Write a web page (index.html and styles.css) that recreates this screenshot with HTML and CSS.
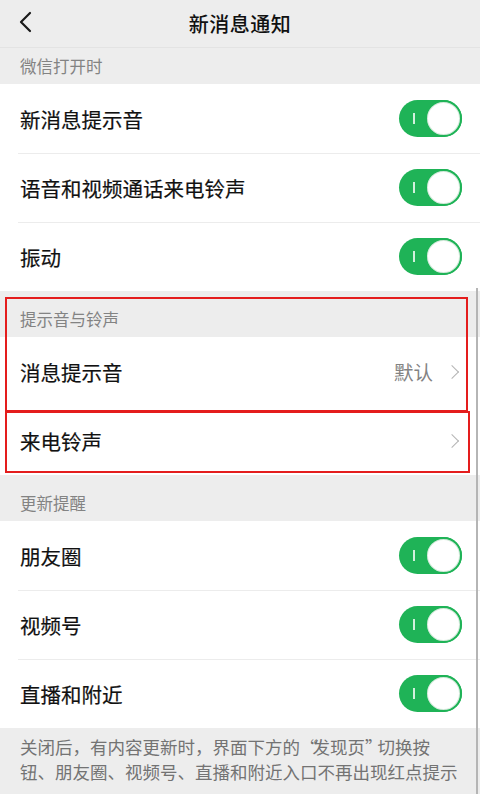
FILE: index.html
```html
<!DOCTYPE html>
<html lang="zh-CN">
<head>
    <meta charset="UTF-8">
    <meta name="viewport" content="width=device-width, initial-scale=1.0">
    <title>新消息通知</title>
    <link rel="stylesheet" href="styles.css">
</head>
<body>
    <div class="page">
        <div class="nav-bar">
            <svg class="back" width="14" height="22" viewBox="0 0 14 22">
                <polyline points="12,2 3,11 12,20" fill="none" stroke="#1a1a1a" stroke-width="2.2" stroke-linecap="round" stroke-linejoin="round"/>
            </svg>
            <div class="nav-title">新消息通知</div>
        </div>

        <div class="section-title first">微信打开时</div>
        <div class="row">
            <span class="label">新消息提示音</span>
            <span class="switch on"></span>
        </div>
        <div class="row">
            <span class="label">语音和视频通话来电铃声</span>
            <span class="switch on"></span>
        </div>
        <div class="row">
            <span class="label">振动</span>
            <span class="switch on"></span>
        </div>

        <div class="marked">
            <div class="section-title">提示音与铃声</div>
            <div class="row">
                <span class="label">消息提示音</span>
                <span class="value">默认</span>
                <span class="arrow"></span>
            </div>
            <div class="frame frame-top"></div>
        </div>
        <div class="marked">
            <div class="row">
                <span class="label">来电铃声</span>
                <span class="arrow"></span>
            </div>
            <div class="frame frame-bottom"></div>
        </div>

        <div class="section-title">更新提醒</div>
        <div class="row">
            <span class="label">朋友圈</span>
            <span class="switch on"></span>
        </div>
        <div class="row">
            <span class="label">视频号</span>
            <span class="switch on"></span>
        </div>
        <div class="row">
            <span class="label">直播和附近</span>
            <span class="switch on"></span>
        </div>

        <div class="tip">关闭后，有内容更新时，界面下方的<span class="quote">“</span>发现页<span class="quote">”</span>切换按<br>钮、朋友圈、视频号、直播和附近入口不再出现红点提示</div>

        <div class="scroll-bar"></div>
    </div>
</body>
</html>
```

FILE: styles.css
```css
:root {
    --page-bg: #ededed;
    --cell-bg: #ffffff;
    --text-color: #111111;
    --sub-text: #838383;
    --divider: #ececec;
    --green: #1fb357;
    --mark: #e41d1d;
}

body {
    margin: 0;
    padding: 0;
    font-family: "Noto Sans CJK SC", "Noto Sans", sans-serif;
    background-color: var(--page-bg);
    color: var(--text-color);
}

.page {
    position: relative;
    width: 480px;
    height: 794px;
    overflow: hidden;
    background-color: var(--page-bg);
}

.nav-bar {
    height: 48px;
    display: flex;
    align-items: center;
    justify-content: center;
    position: relative;
    border-bottom: 1px solid #e3e3e3;
    box-sizing: border-box;
}

.back {
    position: absolute;
    left: 18px;
    top: 11px;
}

.nav-title {
    font-size: 20px;
    font-weight: 500;
    letter-spacing: 0.5px;
}

.section-title {
    height: 46px;
    box-sizing: border-box;
    padding: 0 20px 6px;
    display: flex;
    align-items: flex-end;
    font-size: 16.5px;
    color: var(--sub-text);
}

.section-title.first {
    height: 36px;
}

.row {
    height: 69px;
    box-sizing: border-box;
    display: flex;
    align-items: center;
    padding: 0 18px 0 20px;
    background-color: var(--cell-bg);
    position: relative;
}

.row + .row::before {
    content: "";
    position: absolute;
    left: 18px;
    right: 0;
    top: 0;
    height: 1px;
    background-color: var(--divider);
}

.label {
    flex-grow: 1;
    font-size: 20.5px;
    -webkit-text-stroke: 0.2px var(--text-color);
}

.value {
    font-size: 19.5px;
    color: var(--sub-text);
    margin-right: 14px;
}

.arrow {
    width: 9px;
    height: 9px;
    border-top: 1.6px solid #b4b4b4;
    border-right: 1.6px solid #b4b4b4;
    transform: rotate(45deg);
    margin-right: 5px;
}

.switch {
    width: 63px;
    height: 37px;
    border-radius: 19px;
    background-color: var(--green);
    position: relative;
    flex-shrink: 0;
}

.switch::before {
    content: "";
    position: absolute;
    left: 14px;
    top: 13px;
    width: 1.6px;
    height: 11px;
    background-color: rgba(255,255,255,0.8);
}

.switch::after {
    content: "";
    position: absolute;
    right: 0;
    top: 0;
    width: 37px;
    height: 37px;
    box-sizing: border-box;
    border-radius: 50%;
    background-color: #fff;
    border: 2px solid var(--green);
    box-shadow: inset 0 0 0 1px #d6e9dc;
}

.marked {
    position: relative;
}

.frame {
    position: absolute;
    z-index: 2;
    border: 2.5px solid var(--mark);
    pointer-events: none;
}

.frame-top {
    top: 6px;
    left: 5px;
    right: 12px;
    bottom: -6px;
}

.frame-bottom {
    top: 5px;
    left: 5px;
    right: 10px;
    bottom: 2px;
}

.tip {
    padding: 6px 0 0 20px;
    font-size: 17.5px;
    line-height: 25px;
    color: #737373;
    white-space: nowrap;
}

.quote {
    letter-spacing: -5px;
}

.quote + * {
    margin-left: 0;
}

.scroll-bar {
    position: absolute;
    right: 2px;
    top: 288px;
    bottom: 0;
    width: 2px;
    background-color: #b5b5b5;
}
```
